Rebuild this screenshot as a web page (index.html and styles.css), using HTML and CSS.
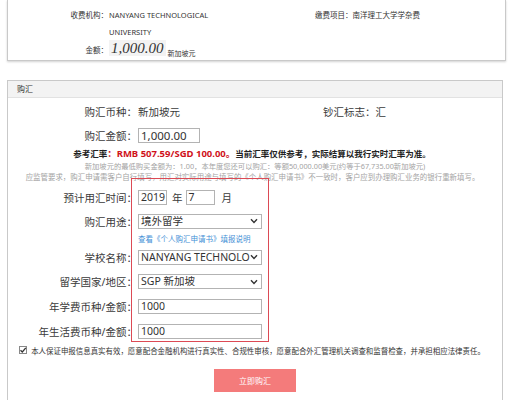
FILE: index.html
```html
<!DOCTYPE html>
<html lang="zh-CN">
<head>
<meta charset="utf-8">
<title>购汇</title>
<link rel="stylesheet" href="styles.css">
</head>
<body>
<div class="card topcard">
  <div class="top-grid">
    <div class="top-left">
      <div class="trow"><span class="tl">收费机构：</span><span class="tv">NANYANG TECHNOLOGICAL UNIVERSITY</span></div>
      <div class="trow amtrow"><span class="tl">金额：</span><span class="tv amtv"><span class="bigamt">1,000.00</span><span class="cur">新加坡元</span></span></div>
    </div>
    <div class="top-right">缴费项目：南洋理工大学学杂费</div>
  </div>
</div>

<div class="card main">
  <div class="head">购汇</div>
  <div class="body">
    <div class="row r1"><span class="lbl">购汇币种：</span><span class="val">新加坡元</span><span class="rt">钞汇标志：汇</span></div>
    <div class="row"><span class="lbl">购汇金额：</span><span class="box amt">1,000.00</span></div>
    <p class="rate">参考汇率<span class="red">：RMB 507.59/SGD 100.00。</span>当前汇率仅供参考，实际结算以我行实时汇率为准。</p>
    <p class="gray g1">新加坡元的最低购买金额为：1.00，本年度您还可以购汇：等额50,000.00美元(约等于67,735.00新加坡元)</p>
    <p class="gray g2">应监管要求，购汇申请需客户自行填写，用汇对实际用途与填写的《个人购汇申请书》不一致时，客户应到办理购汇业务的银行重新填写。</p>
    <div class="row date"><span class="lbl">预计用汇时间：</span><span class="box yr">2019</span><span class="unit u1">年</span><span class="box mo">7</span><span class="unit u2">月</span></div>
    <div class="row"><span class="lbl">购汇用途：</span><span class="box sel">境外留学<svg class="chev" width="8" height="6" viewBox="0 0 8 6"><path d="M1 1.2 L4 4.4 L7 1.2" fill="none" stroke="#333" stroke-width="1.4"/></svg></span></div>
    <div class="linkrow"><span class="link">查看《个人购汇申请书》填报说明</span></div>
    <div class="row"><span class="lbl">学校名称：</span><span class="box sel">NANYANG TECHNOLO<svg class="chev" width="8" height="6" viewBox="0 0 8 6"><path d="M1 1.2 L4 4.4 L7 1.2" fill="none" stroke="#333" stroke-width="1.4"/></svg></span></div>
    <div class="row r25"><span class="lbl">留学国家/地区：</span><span class="box sel">SGP 新加坡<svg class="chev" width="8" height="6" viewBox="0 0 8 6"><path d="M1 1.2 L4 4.4 L7 1.2" fill="none" stroke="#333" stroke-width="1.4"/></svg></span></div>
    <div class="row r25"><span class="lbl">年学费币种/金额：</span><span class="box txt">1000</span></div>
    <div class="row r25"><span class="lbl">年生活费币种/金额：</span><span class="box txt">1000</span></div>
    <div class="checkrow"><span class="cb"><svg width="8" height="8" viewBox="0 0 8 8"><path d="M1.5 4.2 L3.3 6 L6.8 1.8" fill="none" stroke="#333" stroke-width="1.3"/></svg></span><span class="cbtext">本人保证申报信息真实有效，愿意配合金融机构进行真实性、合规性审核，愿意配合外汇管理机关调查和监督检查，并承担相应法律责任。</span></div>
    <div class="btn">立即购汇</div>
  </div>
  <div class="redbox"></div>
</div>
</body>
</html>
```

FILE: styles.css
```css
* { box-sizing: border-box; }
html, body { margin: 0; padding: 0; background: #fff; }
body {
  font-family: "Noto Sans", "Noto Sans CJK SC", sans-serif;
  color: #333;
  overflow: hidden;
}
p { margin: 0; }

.card {
  border: 1px solid #c9c9c9;
  background: #fff;
}

.topcard {
  border-top: 0;
  margin: 0 2px 0 7px;
  height: 61px;
  box-shadow: 0 1px 2px rgba(0,0,0,0.18);
}
.top-grid {
  display: grid;
  grid-template-columns: 307px 1fr;
  padding-top: 7px;
  font-size: 7.5px;
}
.trow {
  display: grid;
  grid-template-columns: 100px 108px;
  line-height: 17px;
}
.tl { text-align: right; }
.tv { padding-left: 1px; }
.amtrow { height: 19px; align-items: center; }
.amtv { display: flex; align-items: center; height: 19px; }
.bigamt {
  font-family: "Liberation Serif", serif;
  font-style: italic;
  font-size: 15px;
  line-height: 16px;
  background: #f3f3f3;
  padding: 0 2px;
  margin-bottom: 6px;
  color: #333;
}
.cur { font-size: 7px; line-height: 10px; margin-left: 2px; margin-top: 6px; }
.top-right { line-height: 17px; }

.main {
  position: relative;
  margin: 19px 5px 0 7px;
}
.head {
  height: 17px;
  background: #f3f3f3;
  border-bottom: 1px solid #e2e2e2;
  font-size: 8px;
  line-height: 16px;
  padding-left: 9px;
}
.body { padding-bottom: 20px; }

.row {
  display: flex;
  align-items: center;
  height: 24px;
  font-size: 10.5px;
  color: #3a3a3a;
}
.r1 { margin-top: 1px; }
.r25 { height: 25px; }
.lbl {
  width: 129px;
  flex: none;
  text-align: right;
  margin-right: 1px;
}
.val { width: 185px; flex: none; }
.rt { flex: none; }

.box {
  display: flex;
  align-items: center;
  height: 15px;
  border: 1px solid #b3b3b3;
  background: #fff;
  padding: 0 2px;
  font-size: 10.5px;
  line-height: 13px;
  color: #333;
  white-space: nowrap;
  overflow: hidden;
}
.amt { width: 62px; font-size: 11.5px; }
.yr, .mo { width: 29px; }
.unit { font-size: 10.5px; }
.u1 { margin: 0 3px 0 5px; }
.u2 { margin-left: 7px; }
.sel { width: 124px; justify-content: space-between; padding-right: 3px; }
.txt { width: 124px; }
.chev { flex: none; }

.rate {
  margin-top: 1px;
  line-height: 12px;
  text-align: center;
  font-size: 8.5px;
  font-weight: bold;
  color: #222;
  padding-right: 6px;
}
.red { color: #d0121b; font-size: 9.5px; }
.gray { color: #a3a3a3; text-align: center; white-space: nowrap; }
.g1 { font-size: 7.3px; line-height: 12px; }
.g2 { font-size: 7.45px; line-height: 11px; padding-right: 5px; }
.date { margin-top: 2px; }

.linkrow {
  height: 12px;
  line-height: 12px;
  padding-left: 130px;
  font-size: 7.5px;
}
.link { color: #3f8fd6; }

.checkrow {
  display: flex;
  align-items: center;
  justify-content: center;
  height: 12px;
  padding-right: 6px;
}
.cb {
  width: 8px;
  height: 8px;
  border: 1px solid #888;
  display: flex;
  align-items: center;
  justify-content: center;
  margin-right: 4px;
  flex: none;
}
.cb svg { flex: none; }
.cbtext { font-size: 7.45px; white-space: nowrap; color: #333; }

.btn {
  width: 82px;
  height: 23px;
  margin: 13px auto 0;
  background: #f47b7b;
  color: #fff;
  font-size: 8px;
  line-height: 23px;
  text-align: center;
}

.redbox {
  position: absolute;
  left: 123px;
  top: 97px;
  width: 138px;
  height: 164px;
  border: 1.5px solid #dc4a55;
  pointer-events: none;
}
```
